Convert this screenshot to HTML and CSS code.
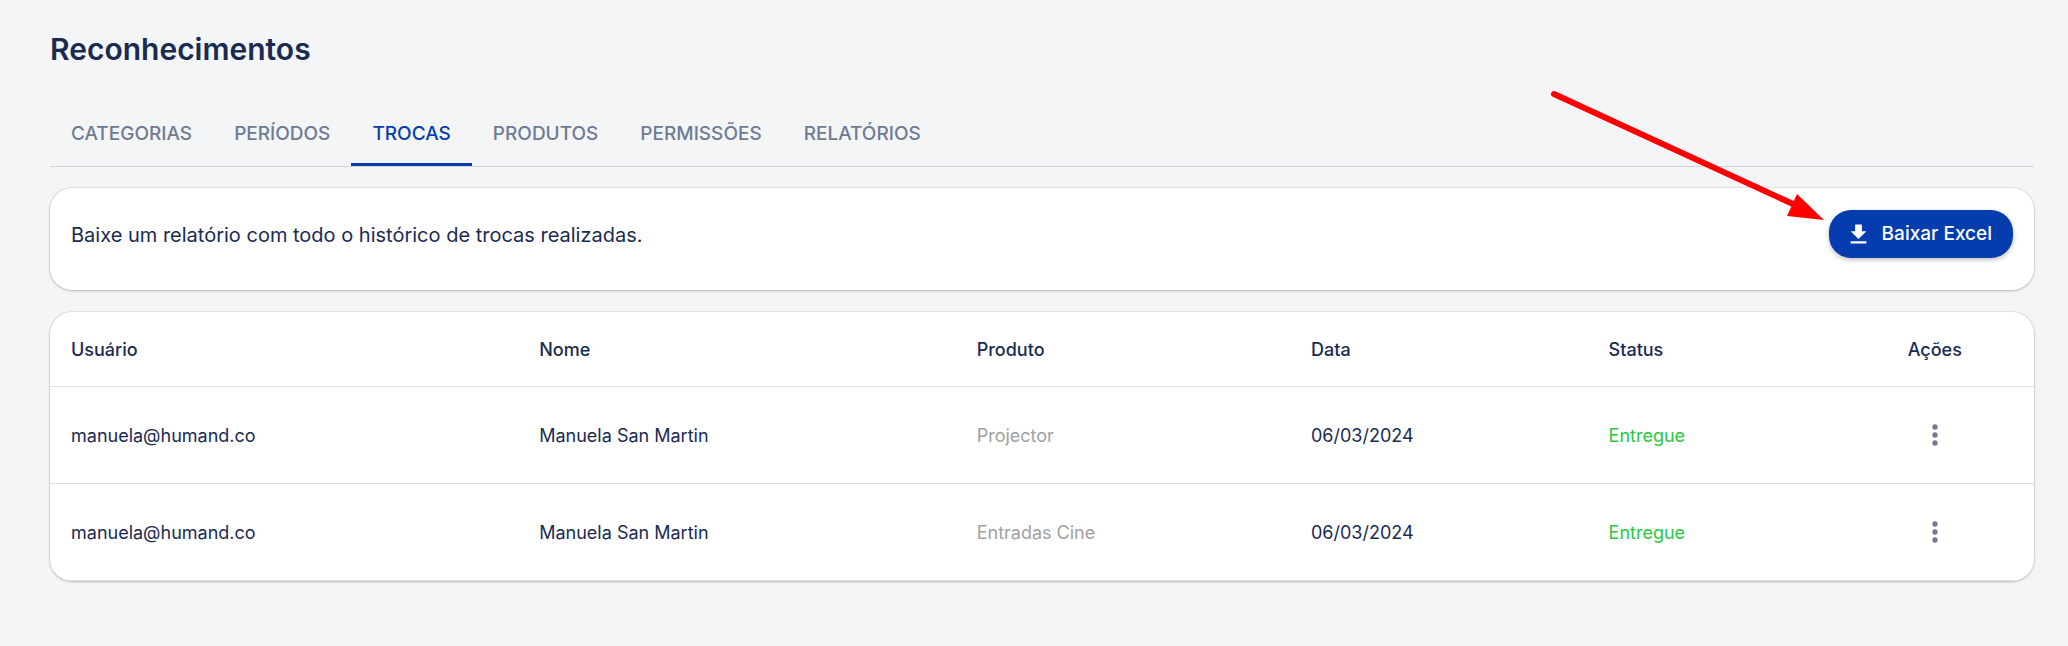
FILE: index.html
```html
<!DOCTYPE html>
<html lang="pt-BR">
<head>
<meta charset="utf-8">
<meta name="viewport" content="width=device-width, initial-scale=1">
<title>Reconhecimentos</title>
<link rel="stylesheet" href="styles.css">
</head>
<body>
<main class="page">
  <h1 class="title">Reconhecimentos</h1>
  <nav class="tabs" aria-label="Seções">
    <a class="tab" href="#categorias">CATEGORIAS</a>
    <a class="tab" href="#periodos">PERÍODOS</a>
    <a class="tab tab-active" href="#trocas" aria-current="page">TROCAS</a>
    <a class="tab" href="#produtos">PRODUTOS</a>
    <a class="tab" href="#permissoes">PERMISSÕES</a>
    <a class="tab" href="#relatorios">RELATÓRIOS</a>
  </nav>
  <section class="card report">
    <p class="report-text">Baixe um relatório com todo o histórico de trocas realizadas.</p>
    <div class="report-action">
      <button class="download" type="button">
        <svg class="download-icon" viewBox="0 0 24 24" aria-hidden="true"><path d="M19 9h-4V3H9v6H5l7 7 7-7zM5 18v2h14v-2H5z"/></svg>
        Baixar Excel
      </button>
      <svg class="pointer" viewBox="0 0 280 140" aria-hidden="true">
        <path class="pointer-line" d="M9 9 L248 119"/>
        <path class="pointer-head" d="M279 135 L252 109 L242 131 Z"/>
      </svg>
    </div>
  </section>
  <section class="card">
    <table class="table">
      <colgroup>
        <col class="col-user"><col class="col-name"><col class="col-product"><col class="col-date"><col class="col-status"><col class="col-actions">
      </colgroup>
      <thead>
        <tr><th scope="col">Usuário</th><th scope="col">Nome</th><th scope="col">Produto</th><th scope="col">Data</th><th scope="col">Status</th><th scope="col" class="center">Ações</th></tr>
      </thead>
      <tbody>
        <tr>
          <td>manuela@humand.co</td><td>Manuela San Martin</td><td class="product">Projector</td><td>06/03/2024</td><td class="status">Entregue</td>
          <td class="center"><button class="more" type="button" aria-label="Mais ações"><svg class="more-icon" viewBox="0 0 24 24" aria-hidden="true"><circle cx="12" cy="6" r="2"/><circle cx="12" cy="12" r="2"/><circle cx="12" cy="18" r="2"/></svg></button></td>
        </tr>
        <tr>
          <td>manuela@humand.co</td><td>Manuela San Martin</td><td class="product">Entradas Cine</td><td>06/03/2024</td><td class="status">Entregue</td>
          <td class="center"><button class="more" type="button" aria-label="Mais ações"><svg class="more-icon" viewBox="0 0 24 24" aria-hidden="true"><circle cx="12" cy="6" r="2"/><circle cx="12" cy="12" r="2"/><circle cx="12" cy="18" r="2"/></svg></button></td>
        </tr>
      </tbody>
    </table>
  </section>
</main>
</body>
</html>
```
FILE: styles.css
```css
* { box-sizing: border-box; }

body {
  margin: 0;
  background: #f3f5f7;
  color: #1a2b52;
  font-family: Inter, "Liberation Sans", sans-serif;
  font-size: 18px;
  line-height: 24px;
}

.page { padding: 28px 34px 28px 50px; }

.title {
  margin: 0 0 40px;
  font-size: 30px;
  line-height: 42px;
  font-weight: 600;
}

.tabs {
  display: flex;
  margin-bottom: 21px;
  border-bottom: 1px solid #d3d5d9;
}

.tab {
  padding: 12px 21px 17px;
  border-bottom: 3px solid transparent;
  color: #6f7b93;
  font-size: 19px;
  font-weight: 500;
  line-height: 24px;
  text-decoration: none;
}

.tab-active {
  border-color: #053dae;
  color: #053dae;
}

.card {
  overflow: hidden;
  border-radius: 22px;
  background: #fff;
  box-shadow: 0 0 0 1px rgba(0, 0, 0, 0.06), 0 1px 3px rgba(0, 0, 0, 0.2);
}

.card + .card { margin-top: 22px; }

.report {
  display: flex;
  justify-content: space-between;
  overflow: visible;
  padding: 22px 21px 30px;
}

.report-text {
  margin: 0;
  font-size: 20px;
  line-height: 50px;
}

.report-action { position: relative; }

.download {
  display: flex;
  align-items: center;
  gap: 10px;
  height: 48px;
  padding: 0 21px 0 16px;
  border: 0;
  border-radius: 22px;
  background: #053dae;
  box-shadow: 0 2px 5px rgba(0, 0, 0, 0.25);
  color: #fff;
  font: inherit;
  font-size: 19px;
  font-weight: 500;
  white-space: nowrap;
}

.download-icon {
  width: 27px;
  height: 27px;
  fill: #fff;
}

.pointer {
  position: absolute;
  right: 100%;
  top: -125px;
  width: 280px;
  height: 140px;
  margin-right: 4px;
  pointer-events: none;
}

.pointer-line {
  fill: none;
  stroke: #f00;
  stroke-width: 6;
  stroke-linecap: round;
}

.pointer-head { fill: #f00; }

.table {
  width: 100%;
  border-collapse: separate;
  border-spacing: 0;
  table-layout: fixed;
}

.col-user { width: 23.6%; }
.col-name { width: 22.05%; }
.col-product { width: 16.85%; }
.col-date { width: 15%; }
.col-status { width: 12.5%; }
.col-actions { width: 10%; }

.table th,
.table td {
  height: 97px;
  padding: 2px 21px 0;
  border-bottom: 1px solid #e0e0e0;
  font-weight: 400;
  text-align: left;
}

.table th {
  height: 75px;
  font-weight: 500;
}

.table .center { text-align: center; }
.table td.center { padding-top: 0; }
.table .product { color: #a1a1a1; }
.table .status { color: #28c840; }

.more {
  display: inline-flex;
  padding: 8px;
  border: 0;
  background: none;
  vertical-align: middle;
}

.more-icon {
  width: 32px;
  height: 32px;
  fill: #6f7b93;
}
```
